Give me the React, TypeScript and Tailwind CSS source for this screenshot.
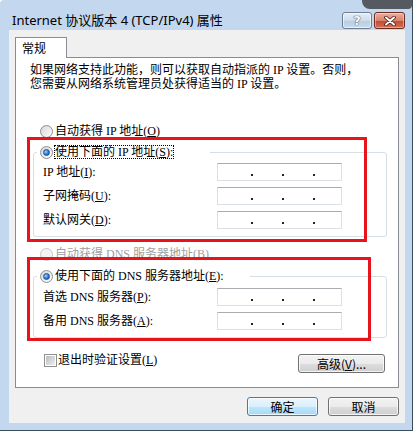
import React from "react";

const body = "font-['Liberation_Serif','Noto_Sans_CJK_SC',serif] text-[12px] text-black";

function Radio({ checked, disabled }: { checked?: boolean; disabled?: boolean }) {
  return (
    <div
      className={`w-[13px] h-[13px] shrink-0 rounded-full border flex items-center justify-center ${
        disabled
          ? "border-[#c8c8c8] bg-[#f4f4f4]"
          : "border-[#8e8f8f] bg-[linear-gradient(135deg,#d6d6d6,#ffffff)]"
      }`}
    >
      {checked && (
        <div className="w-[7px] h-[7px] rounded-full border border-[#1d4f91] bg-[radial-gradient(circle_at_35%_35%,#9fd4ff,#2a6fc9_60%,#1b4e94)]" />
      )}
    </div>
  );
}

function IpBox() {
  return (
    <div className="w-[125px] h-[18px] bg-white border border-[#dbdfe6] border-t-[#abadb3] flex items-end pb-[4px]">
      <div className="w-[33px]" />
      <div className="w-[2px] h-[2px] bg-[#222]" />
      <div className="w-[29px]" />
      <div className="w-[2px] h-[2px] bg-[#222]" />
      <div className="w-[29px]" />
      <div className="w-[2px] h-[2px] bg-[#222]" />
    </div>
  );
}

function Row({ label }: { label: React.ReactNode }) {
  return (
    <div className="h-[18px] flex items-center">
      <div className="ml-[9px] w-[174px] leading-[14px] whitespace-pre">{label}</div>
      <IpBox />
    </div>
  );
}

function WinButton({ children, primary, className = "" }: { children: React.ReactNode; primary?: boolean; className?: string }) {
  return (
    <div
      className={`h-[19px] rounded-[3px] border flex items-center justify-center shadow-[inset_0_0_0_1px_rgba(255,255,255,0.75)] font-['Noto_Sans_CJK_SC',sans-serif] text-[12px] leading-none text-black ${
        primary
          ? "border-[#3c7fb1] bg-[linear-gradient(to_bottom,#eaf6fd_0%,#d9f0fc_50%,#bee6fd_51%,#a7d9f5_100%)]"
          : "border-[#707070] bg-[linear-gradient(to_bottom,#f2f2f2_0%,#ebebeb_50%,#dddddd_51%,#cfcfcf_100%)]"
      } ${className}`}
    >
      {children}
    </div>
  );
}

export default function App() {
  return (
    <div className="w-[417px] h-[435px] bg-white">
      <div className="relative w-[413px] h-[431px] bg-[#c3d7ee] border-r border-b border-[#3a4b5c] rounded-tl-[4px] flex flex-col">
        {/* shadow blob at top right */}
        <div className="absolute left-[362px] top-0 w-[50px] h-[9px] bg-[#555a60] rounded-bl-[8px] rounded-br-[4px]" />

        {/* Title bar */}
        <div className="h-[30px] flex items-start pl-[12px] pr-[7px] shrink-0">
          <div className="flex-1 pt-[11px] font-['Noto_Sans','Noto_Sans_CJK_SC',sans-serif] text-[13px] leading-[18px] text-black">
            Internet 协议版本 4 (TCP/IPv4) 属性
          </div>
          <div className="mt-[12px] flex gap-[2px]">
            <div className="w-[30px] h-[17px] rounded-[3px] border border-[#6d7e92] bg-[linear-gradient(to_bottom,#e4edf7_0%,#cddcec_50%,#b8cce2_51%,#c9dbee_100%)] flex items-center justify-center shadow-[inset_0_0_0_1px_rgba(255,255,255,0.6)]">
              <span className="font-['DejaVu_Sans',sans-serif] font-bold text-[13px] leading-none text-white [text-shadow:0_0_1px_#2b3a4c,0_0_1px_#2b3a4c]">?</span>
            </div>
            <div className="w-[31px] h-[17px] rounded-[3px] border border-[#6b2b1e] bg-[linear-gradient(to_bottom,#eab0a0_0%,#d9826c_50%,#c24a2f_51%,#d0705a_100%)] flex items-center justify-center shadow-[inset_0_0_0_1px_rgba(255,255,255,0.4)]">
              <svg width="12" height="10" viewBox="0 0 12 10">
                <path d="M2 1.5 L10 8.5 M10 1.5 L2 8.5" stroke="#4a1a10" strokeWidth="3.6" strokeLinecap="round" />
                <path d="M2 1.5 L10 8.5 M10 1.5 L2 8.5" stroke="#ffffff" strokeWidth="2" strokeLinecap="round" />
              </svg>
            </div>
          </div>
        </div>

        {/* Client area */}
        <div className="ml-[9px] w-[396px] h-[393px] bg-[#f0f0f0] pt-[7px] pl-[6px] pr-[6px] flex flex-col">
          {/* Tab */}
          <div className="relative z-10 -mb-px w-[52px] h-[21px] bg-white border border-b-0 border-[#898c95] flex items-start pl-[6px] pt-[3px]">
            <span className="font-['Noto_Sans_CJK_SC',sans-serif] text-[12px] leading-[14px] text-black">常规</span>
          </div>

          {/* Panel */}
          <div className={`relative h-[331px] bg-white border border-[#898c95] flex flex-col ${body}`}>
            <p className="ml-[14px] mt-[5px] leading-[14px] whitespace-pre">
              如果网络支持此功能，则可以获取自动指派的 IP 设置。否则，
              <br />
              您需要从网络系统管理员处获得适当的 IP 设置。
            </p>

            <div className="ml-[24px] mt-[33px] h-[14px] flex items-center gap-[2px] leading-[14px]">
              <Radio />
              <span className="whitespace-pre">自动获得 IP 地址(<u>O</u>)</span>
            </div>

            {/* Group 1 */}
            <div className="ml-[17px] mt-[14px] w-[354px] border border-[#d5dfe5] rounded-[3px] pb-[7px]">
              <div className="-mt-[8px] ml-[3px] w-[173px] h-[14px] bg-white flex items-center pl-[3px]">
                <Radio checked />
                <span className="ml-px border border-dotted border-black leading-[12px] whitespace-pre">使用下面的 IP 地址(<u>S</u>):</span>
              </div>
              <div className="mt-[4px] flex flex-col gap-[6px]">
                <Row label={<>IP 地址(<u>I</u>):</>} />
                <Row label={<>子网掩码(<u>U</u>):</>} />
                <Row label={<>默认网关(<u>D</u>):</>} />
              </div>
            </div>

            <div className="ml-[24px] mt-[10px] h-[14px] flex items-center gap-[2px] leading-[14px] text-[#a0a0a0]">
              <Radio disabled />
              <span className="whitespace-pre">自动获得 DNS 服务器地址(<u>B</u>)</span>
            </div>

            {/* Group 2 */}
            <div className="ml-[17px] mt-[15px] w-[354px] border border-[#d5dfe5] rounded-[3px] pb-[7px]">
              <div className="-mt-[8px] ml-[3px] w-[213px] h-[14px] bg-white flex items-center pl-[3px] gap-[2px]">
                <Radio checked />
                <span className="leading-[14px] whitespace-pre">使用下面的 DNS 服务器地址(<u>E</u>):</span>
              </div>
              <div className="mt-[5px] flex flex-col gap-[6px]">
                <Row label={<>首选 DNS 服务器(<u>P</u>):</>} />
                <Row label={<>备用 DNS 服务器(<u>A</u>):</>} />
              </div>
            </div>

            {/* Bottom row */}
            <div className="mt-[15px] ml-[28px] mr-[13px] flex items-start justify-between">
              <div className="h-[14px] flex items-center gap-[1px] leading-[14px]">
                <div className="w-[13px] h-[13px] border border-[#8e8f8f] bg-white p-px">
                  <div className="w-full h-full bg-[linear-gradient(135deg,#b9bcc0,#eeeeee)]" />
                </div>
                <span className="whitespace-pre">退出时验证设置(<u>L</u>)</span>
              </div>
              <WinButton className="mt-px w-[87px]">高级(<u>V</u>)...</WinButton>
            </div>

            {/* annotation boxes */}
            <div className="absolute left-[11px] top-[79px] w-[340px] h-[105px] border-[3px] border-[#e8141c] pointer-events-none" />
            <div className="absolute left-[11px] top-[199px] w-[344px] h-[84px] border-[3px] border-[#e8141c] pointer-events-none" />
          </div>

          {/* Dialog buttons */}
          <div className="mt-[9px] flex justify-end gap-[10px]">
            <WinButton primary className="w-[71px]">确定</WinButton>
            <WinButton className="w-[71px]">取消</WinButton>
          </div>
        </div>
      </div>
    </div>
  );
}
